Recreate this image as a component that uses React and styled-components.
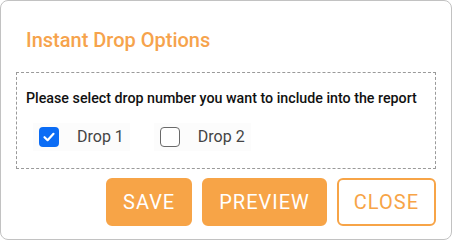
import React, { useState } from "react";
import styled, { createGlobalStyle } from "styled-components";

const GlobalStyle = createGlobalStyle`
  html, body {
    margin: 0;
    padding: 0;
    background: #ffffff;
  }
  body {
    font-family: Roboto, "Liberation Sans", Arial, sans-serif;
  }
`;

const Card = styled.div`
  box-sizing: border-box;
  width: 452px;
  height: 240px;
  border: 1px solid #c2c2c2;
  border-radius: 8px;
  background: #fff;
  padding: 0 15px 0 15px;
`;

const Title = styled.h2`
  margin: 0;
  padding: 27px 0 0 10px;
  height: 43px;
  box-sizing: border-box;
  font-size: 20px;
  line-height: 24px;
  font-weight: 500;
  color: #f6a34c;
`;

const OptionsBox = styled.div`
  box-sizing: border-box;
  height: 97px;
  margin-top: 28px;
  border: 1px dashed #9a9a9a;
  padding: 16px 9px 0 9px;
`;

const Prompt = styled.p`
  margin: 0;
  font-size: 14.25px;
  line-height: 18px;
  font-weight: 500;
  color: #111;
`;

const CheckRow = styled.div`
  display: flex;
  align-items: center;
  gap: 24px;
  margin-top: 16px;
  padding-left: 7px;
`;

const Option = styled.label`
  display: flex;
  align-items: center;
  gap: 18px;
  padding: 4px 6px;
  font-size: 16px;
  line-height: 20px;
  color: #444;
  cursor: pointer;
  background: #fcfcfc;
`;

const Box = styled.span`
  box-sizing: border-box;
  width: 20px;
  height: 20px;
  border-radius: 4px;
  display: flex;
  align-items: center;
  justify-content: center;
  background: ${(p) => (p.$checked ? "#0b6cf5" : "#fff")};
  border: ${(p) => (p.$checked ? "none" : "1.5px solid #6a6a6a")};
`;

const Actions = styled.div`
  display: flex;
  justify-content: flex-end;
  gap: 10px;
  margin-top: 9px;
`;

const Button = styled.button`
  box-sizing: border-box;
  height: 48px;
  padding: 0 15px;
  border-radius: 6px;
  font-family: Roboto, "Liberation Sans", Arial, sans-serif;
  font-size: 20px;
  letter-spacing: 1px;
  font-weight: 400;
  cursor: pointer;
  background: ${(p) => (p.$outline ? "#fff" : "#f7a447")};
  color: ${(p) => (p.$outline ? "#f7a447" : "#fff")};
  border: 2px solid #f7a447;
`;

function CheckBox({ checked }) {
  return (
    <Box $checked={checked}>
      {checked && (
        <svg width="14" height="14" viewBox="0 0 14 14">
          <path
            d="M2.5 7.2 L5.6 10.2 L11.5 3.8"
            fill="none"
            stroke="#fff"
            strokeWidth="2.2"
            strokeLinecap="round"
            strokeLinejoin="round"
          />
        </svg>
      )}
    </Box>
  );
}

export default function App() {
  const [drops, setDrops] = useState({ 1: true, 2: false });
  const toggle = (n) => setDrops((d) => ({ ...d, [n]: !d[n] }));

  return (
    <>
      <GlobalStyle />
      <Card>
        <Title>Instant Drop Options</Title>
        <OptionsBox>
          <Prompt>Please select drop number you want to include into the report</Prompt>
          <CheckRow>
            {[1, 2].map((n) => (
              <Option key={n} onClick={() => toggle(n)}>
                <CheckBox checked={drops[n]} />
                Drop {n}
              </Option>
            ))}
          </CheckRow>
        </OptionsBox>
        <Actions>
          <Button>SAVE</Button>
          <Button>PREVIEW</Button>
          <Button $outline>CLOSE</Button>
        </Actions>
      </Card>
    </>
  );
}
